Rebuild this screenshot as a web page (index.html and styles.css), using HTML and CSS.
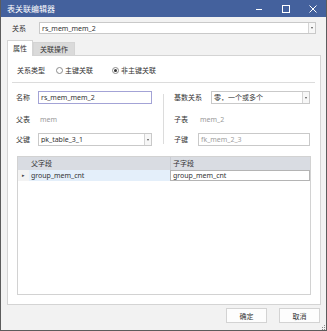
FILE: index.html
```html
<!DOCTYPE html>
<html lang="zh-CN">
<head>
    <meta charset="UTF-8">
    <title>表关联编辑器</title>
    <link rel="stylesheet" href="styles.css">
</head>
<body>
    <div class="window">
        <div class="titlebar">
            <span class="title">表关联编辑器</span>
            <div class="controls">
                <span class="ctl">
                    <svg width="8" height="8" viewBox="0 0 8 8"><line x1="1" y1="4.5" x2="7" y2="4.5" stroke="#fff" stroke-width="1"/></svg>
                </span>
                <span class="ctl">
                    <svg width="8" height="8" viewBox="0 0 8 8"><rect x="0.5" y="0.5" width="7" height="7" fill="none" stroke="#fff" stroke-width="1"/></svg>
                </span>
                <span class="ctl">
                    <svg width="8" height="8" viewBox="0 0 8 8"><path d="M0.5 0.5L7.5 7.5M7.5 0.5L0.5 7.5" stroke="#fff" stroke-width="1"/></svg>
                </span>
            </div>
        </div>

        <div class="relation-row">
            <span class="label rel-label">关系</span>
            <div class="combo wide">
                <span class="combo-text">rs_mem_mem_2</span>
                <span class="drop"></span>
            </div>
        </div>

        <div class="tabs">
            <span class="tab active">属性</span>
            <span class="tab">关联操作</span>
        </div>

        <div class="panel">
            <div class="type-row">
                <span class="label type-label">关系类型</span>
                <span class="radio"></span>
                <span class="radio-text first">主键关联</span>
                <span class="radio checked"></span>
                <span class="radio-text">非主键关联</span>
            </div>
            <div class="separator"></div>

            <div class="form">
                <div class="col">
                    <div class="field">
                        <span class="label lw-left">名称</span>
                        <div class="input focused"><span class="combo-text">rs_mem_mem_2</span></div>
                    </div>
                    <div class="field mid">
                        <span class="label lw-left">父表</span>
                        <span class="value">mem</span>
                    </div>
                    <div class="field last">
                        <span class="label lw-left">父键</span>
                        <div class="combo">
                            <span class="combo-text">pk_table_3_1</span>
                            <span class="drop"></span>
                        </div>
                    </div>
                </div>
                <div class="vsep"></div>
                <div class="col">
                    <div class="field">
                        <span class="label lw-card">基数关系</span>
                        <div class="combo">
                            <span class="combo-text">零，一个或多个</span>
                            <span class="drop"></span>
                        </div>
                    </div>
                    <div class="field mid">
                        <span class="label lw-right">子表</span>
                        <span class="value">mem_2</span>
                    </div>
                    <div class="field last">
                        <span class="label lw-right">子键</span>
                        <div class="input"><span class="combo-text muted">fk_mem_2_3</span></div>
                    </div>
                </div>
            </div>

            <div class="grid">
                <div class="grid-head">
                    <span class="indicator"></span>
                    <span class="cell">父字段</span>
                    <span class="cell">子字段</span>
                </div>
                <div class="grid-row">
                    <span class="indicator">▸</span>
                    <span class="cell selected">group_mem_cnt</span>
                    <span class="cell editing">group_mem_cnt</span>
                </div>
            </div>
        </div>

        <div class="footer">
            <button class="btn">确定</button>
            <button class="btn">取消</button>
        </div>

        <svg class="grip" width="5" height="5" viewBox="0 0 5 5">
            <rect x="3" y="0" width="1" height="1" fill="#8a8a8a"/>
            <rect x="1" y="2" width="1" height="1" fill="#8a8a8a"/>
            <rect x="3" y="2" width="1" height="1" fill="#8a8a8a"/>
            <rect x="3" y="4" width="1" height="1" fill="#8a8a8a"/>
            <rect x="1" y="4" width="1" height="1" fill="#8a8a8a"/>
        </svg>
    </div>
</body>
</html>
```

FILE: styles.css
```css
html, body {
    margin: 0;
    padding: 0;
    overflow: hidden;
}

body {
    font-family: "Segoe UI", "Noto Sans", "Noto Sans CJK SC", sans-serif;
    font-size: 7px;
    line-height: 1;
    color: #333;
}

.window {
    position: relative;
    width: 327px;
    height: 331px;
    box-sizing: border-box;
    border: 1px solid #5c5c5c;
    border-top: none;
    background: #f2f2f2;
    display: flex;
    flex-direction: column;
}

.titlebar {
    height: 17px;
    background: #44619d;
    color: #fff;
    display: flex;
    align-items: center;
    padding-left: 6px;
    flex-shrink: 0;
}

.title {
    font-size: 8px;
}

.controls {
    margin-left: auto;
    display: flex;
    height: 100%;
}

.ctl {
    width: 27px;
    display: flex;
    align-items: center;
    justify-content: center;
}

.relation-row {
    display: flex;
    align-items: center;
    margin-top: 5px;
    height: 12px;
    padding: 0 10px 0 11px;
    flex-shrink: 0;
}

.rel-label {
    width: 27px;
}

.combo, .input {
    flex: 1;
    height: 100%;
    box-sizing: border-box;
    border: 1px solid #c9c9c9;
    background: #fff;
    display: flex;
    align-items: center;
}

.combo-text {
    flex: 1;
    padding-left: 2px;
    white-space: nowrap;
    overflow: hidden;
}

.combo-text.muted {
    color: #a0a0a0;
}

.input.focused {
    border-color: #a3a3d6;
}

.drop {
    width: 7px;
    height: 100%;
    box-sizing: border-box;
    border-left: 1px solid #d4d4d4;
    background: #f7f7f7;
    position: relative;
}

.drop::after {
    content: "";
    position: absolute;
    left: 2px;
    top: 50%;
    margin-top: -1px;
    border-left: 1.5px solid transparent;
    border-right: 1.5px solid transparent;
    border-top: 2px solid #555;
}

.tabs {
    display: flex;
    align-items: flex-end;
    margin: 6px 0 0 6px;
    height: 15px;
    flex-shrink: 0;
    position: relative;
    z-index: 1;
}

.tab {
    height: 13px;
    box-sizing: border-box;
    padding: 0 6px;
    display: flex;
    align-items: center;
    white-space: nowrap;
    background: #dadada;
    border: 1px solid #d4d4d4;
    border-bottom: none;
}

.tab.active {
    height: 16px;
    margin-bottom: -1px;
    background: #fff;
    padding: 0 5px;
}

.panel {
    flex: 1;
    margin: 0 5px 0 6px;
    background: #fff;
    border: 1px solid #d4d4d4;
    display: flex;
    flex-direction: column;
    min-height: 0;
}

.type-row {
    display: flex;
    align-items: center;
    height: 12px;
    margin-top: 8px;
    padding-left: 9px;
}

.type-label {
    width: 39px;
}

.radio {
    width: 7px;
    height: 7px;
    box-sizing: border-box;
    border: 1px solid #8c8c8c;
    border-radius: 50%;
    background: #fff;
    position: relative;
}

.radio.checked::after {
    content: "";
    position: absolute;
    left: 1px;
    top: 1px;
    width: 3px;
    height: 3px;
    border-radius: 50%;
    background: #333;
}

.radio-text {
    margin-left: 2px;
}

.radio-text.first {
    width: 47px;
}

.separator {
    height: 1px;
    background: #dcdcdc;
    margin: 6px 5px 0 4px;
}

.form {
    display: flex;
    margin: 8px 0 0 8px;
}

.col {
    width: 136px;
    display: flex;
    flex-direction: column;
}

.field {
    display: flex;
    align-items: center;
    height: 13px;
}

.field.mid {
    margin-top: 9px;
}

.field.last {
    margin-top: 7px;
}

.lw-left {
    width: 22px;
}

.lw-right {
    width: 24px;
}

.lw-card {
    width: 37px;
}

.value {
    padding-left: 2px;
    color: #9a9a9a;
}

.vsep {
    width: 1px;
    background: #dcdcdc;
    margin: 3px 10px 2px 11px;
}

.grid {
    flex: 1;
    margin: 10px 9px 9px 9px;
    border: 1px solid #d2d2d2;
    background: #fff;
}

.grid-head, .grid-row {
    display: flex;
}

.grid-head {
    height: 13px;
    background: #d9dce2;
}

.grid-row {
    height: 11px;
}

.indicator {
    width: 11px;
    flex-shrink: 0;
    display: flex;
    align-items: center;
    justify-content: center;
    font-size: 5px;
    color: #444;
    background: #f3f3f3;
}

.grid-head .indicator {
    background: #d9dce2;
}

.cell {
    display: flex;
    align-items: center;
    padding-left: 2px;
    box-sizing: border-box;
}

.cell:nth-child(2) {
    width: 141px;
}

.cell:nth-child(3) {
    flex: 1;
}

.grid-head .cell:nth-child(3) {
    border-left: 1px solid #c9ccd3;
}

.cell.selected {
    background: #e4effa;
}

.cell.editing {
    border: 1px solid #b4b4b4;
    background: #fff;
}

.footer {
    height: 25px;
    flex-shrink: 0;
    display: flex;
    justify-content: flex-end;
    align-items: flex-start;
    gap: 12px;
    padding: 3px 6px 0 0;
    box-sizing: border-box;
}

.btn {
    width: 41px;
    height: 15px;
    padding: 0;
    font-family: inherit;
    font-size: 7px;
    color: #333;
    background: #fdfdfd;
    border: 1px solid #d3d3d3;
}

.grip {
    position: absolute;
    right: 0;
    bottom: 0;
}
```
